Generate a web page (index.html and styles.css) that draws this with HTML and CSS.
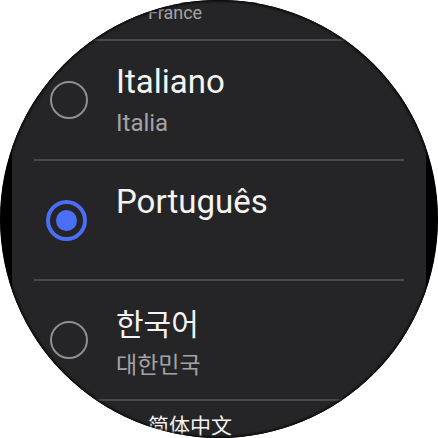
FILE: index.html
```html
<!DOCTYPE html>
<html lang="en">
<head>
<meta charset="utf-8">
<link rel="stylesheet" href="styles.css">
</head>
<body>
<div class="screen">
  <div class="list">
    <div class="edge edge-top"><span class="edge-sub">France</span></div>
    <div class="divider"></div>
    <div class="item">
      <div class="radio-slot"><span class="radio"></span></div>
      <div class="text">
        <div class="title">Italiano</div>
        <div class="sub">Italia</div>
      </div>
    </div>
    <div class="divider"></div>
    <div class="item">
      <div class="radio-slot"><span class="radio radio-on"><span class="dot"></span></span></div>
      <div class="text">
        <div class="title">Português</div>
      </div>
    </div>
    <div class="divider"></div>
    <div class="item">
      <div class="radio-slot"><span class="radio"></span></div>
      <div class="text">
        <div class="title title-ko">한국어</div>
        <div class="sub sub-ko">대한민국</div>
      </div>
    </div>
    <div class="divider"></div>
    <div class="edge edge-bottom"><span class="edge-title">简体中文</span></div>
  </div>
</div>
</body>
</html>
```
FILE: styles.css
```css
html, body {
  margin: 0;
  padding: 0;
  background: #ffffff;
}

.screen {
  position: relative;
  width: 438px;
  height: 438px;
  border-radius: 50%;
  overflow: hidden;
  background: #000000;
  font-family: Roboto, "Noto Sans", sans-serif;
}

.screen::after {
  content: "";
  position: absolute;
  inset: 0;
  border-radius: 50%;
  box-shadow: inset 0 0 3px 1px #000;
  pointer-events: none;
}

.list {
  margin: 0 12px;
  height: 100%;
  background: #252527;
  display: flex;
  flex-direction: column;
}

.divider {
  height: 2px;
  margin: 0 22px;
  background: #4a4a4d;
  flex: none;
}

.edge {
  flex: none;
  box-sizing: border-box;
  padding-left: 136px;
}

.edge-top {
  height: 39px;
  padding-top: 3px;
}

.edge-sub {
  display: block;
  font-size: 18px;
  line-height: 20px;
  color: #a3a3a6;
}

.edge-bottom {
  height: 37px;
  padding-top: 11px;
}

.edge-title {
  display: block;
  font-family: "Noto Sans CJK SC", sans-serif;
  font-size: 21px;
  line-height: 24px;
  color: #f2f2f2;
}

.item {
  flex: none;
  height: 118px;
  display: grid;
  grid-template-columns: 44px 1fr;
  column-gap: 26px;
  padding-left: 34px;
}

.radio-slot {
  align-self: center;
  display: flex;
  align-items: center;
  height: 44px;
}

.radio {
  box-sizing: border-box;
  width: 38px;
  height: 38px;
  margin-left: 4px;
  border-radius: 50%;
  border: 2.5px solid #8f8f91;
}

.radio-on {
  width: 41px;
  height: 41px;
  margin-left: 0;
  border: 4px solid #4a6ff6;
  display: flex;
  align-items: center;
  justify-content: center;
}

.dot {
  width: 21px;
  height: 21px;
  border-radius: 50%;
  background: #4a6ff6;
}

.text {
  padding-top: 22px;
}

.title {
  font-size: 33px;
  line-height: 38px;
  color: #f4f4f4;
}

.sub {
  margin-top: 7px;
  font-size: 24px;
  line-height: 30px;
  color: #a3a3a6;
}

.title-ko {
  font-family: "Noto Sans CJK KR", sans-serif;
  font-size: 30px;
}

.sub-ko {
  font-family: "Noto Sans CJK KR", sans-serif;
  font-size: 23px;
}
```
